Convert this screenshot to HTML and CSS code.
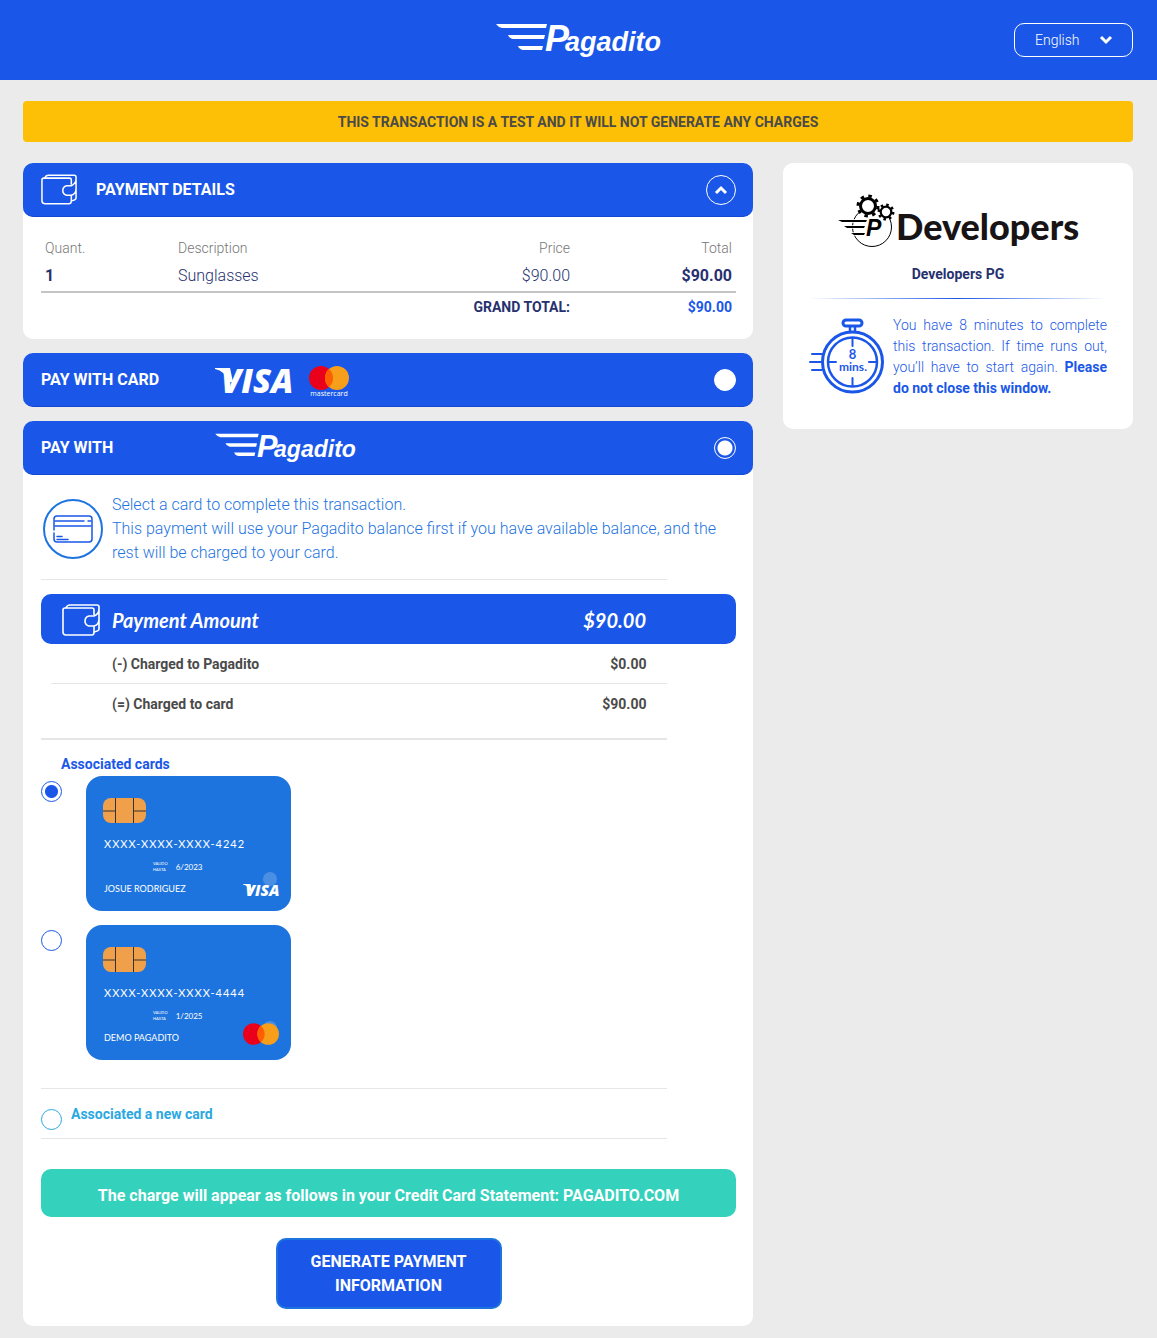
FILE: index.html
```html
<!DOCTYPE html>
<html lang="en">
<head>
<meta charset="utf-8">
<meta name="viewport" content="width=device-width, initial-scale=1">
<title>Pagadito</title>
<link rel="stylesheet" href="styles.css">
</head>
<body>
<svg class="defs" aria-hidden="true">
  <symbol id="mastercard" viewBox="0 0 40 24">
    <circle cx="12" cy="12" r="12" fill="#eb001b"/>
    <circle cx="28" cy="12" r="12" fill="#f79e1b"/>
    <path d="M20 3a12 12 0 0 1 0 18a12 12 0 0 1 0-18z" fill="#ff5f00"/>
  </symbol>
  <symbol id="wallet" viewBox="0 0 38 32">
    <g fill="none" stroke="#fff" stroke-width="1.6" stroke-linejoin="round">
      <path d="M32 11V6q0-2-2-2H3Q1 4 1 6v22q0 3 3 3h26q2 0 2-3v-6"/>
      <path d="M4 4q1-3 4-3h27q2 0 2 2v22q0 2-5 3M37 5q0 5-5 7h-5q-4 1-4 5t4 5h5q5-1 5-7"/>
    </g>
  </symbol>
  <symbol id="chip" viewBox="0 0 43 25">
    <rect width="43" height="25" rx="8" fill="#f0a04b"/>
    <path d="M12.500 0v25M30.500 0v25M0 13h12M31 13h12" stroke="#333" fill="none"/>
  </symbol>
</svg>

<header class="topbar">
  <span></span>
  <svg class="brand" viewBox="0 -2 166 34" role="img" aria-label="Pagadito">
    <path d="M0-1h51l-1 4H6Q2 2 0-1zM12 10h37l-1 4H17q-4-1-5-4zM22 21h25l-1 4H27q-4-1-5-4z"/>
    <text class="logo-text" x="49" y="26" font-size="36">P</text>
    <text class="logo-text" x="69" y="26" font-size="27">agadito</text>
  </svg>
  <div class="language">
    <select aria-label="Language"><option>English</option><option>Español</option></select>
    <svg class="chevron" viewBox="0 0 14 10"><path d="M2 2l5 5 5-5"/></svg>
  </div>
</header>

<main class="page">
  <p class="notice">THIS TRANSACTION IS A TEST AND IT WILL NOT GENERATE ANY CHARGES</p>
  <div class="columns">
    <div class="checkout">
      <section class="panel">
        <div class="panel-head">
          <svg class="wallet-sm"><use href="#wallet"/></svg>
          <h2>PAYMENT DETAILS</h2>
          <button class="collapse" type="button" aria-label="Collapse"><svg class="chevron" viewBox="0 0 14 10"><path d="M2 8l5-5 5 5"/></svg></button>
        </div>
        <div class="details-body">
          <table class="items">
            <colgroup><col class="col-quant"><col><col class="col-price"><col class="col-total"></colgroup>
            <thead><tr><th>Quant.</th><th>Description</th><th class="num">Price</th><th class="num">Total</th></tr></thead>
            <tbody><tr><td class="strong">1</td><td>Sunglasses</td><td class="num">$90.00</td><td class="num strong">$90.00</td></tr></tbody>
            <tfoot><tr><td class="num" colspan="3">GRAND TOTAL:</td><td class="num sum">$90.00</td></tr></tfoot>
          </table>
        </div>
      </section>

      <section class="panel">
        <label class="panel-head">
          <span class="method-title">PAY WITH CARD</span>
          <span class="method-logos">
            <svg class="visa-head" viewBox="0 -1 76 26" role="img" aria-label="Visa">
              <path d="M0 0h15l3 14h-4Q10 3 0 1z"/>
              <text class="visa-text" x="6" y="25" font-size="33">VISA</text>
            </svg>
            <span class="mc-head"><svg class="mc-mark" aria-hidden="true"><use href="#mastercard"/></svg><small>mastercard</small></span>
          </span>
          <input class="method-radio" type="radio" name="method">
        </label>
      </section>

      <section class="panel">
        <label class="panel-head">
          <span class="method-title">PAY WITH</span>
          <span class="method-logos">
            <svg class="brand-sm" viewBox="0 -2 166 34" role="img" aria-label="Pagadito">
              <path d="M0-1h51l-1 4H6Q2 2 0-1zM12 10h37l-1 4H17q-4-1-5-4zM22 21h25l-1 4H27q-4-1-5-4z"/>
              <text class="logo-text" x="49" y="26" font-size="36">P</text>
              <text class="logo-text" x="69" y="26" font-size="27">agadito</text>
            </svg>
          </span>
          <input class="method-radio" type="radio" name="method" checked>
        </label>
        <form class="pay-body">
          <div class="intro">
            <svg class="card-icon" viewBox="0 0 60 60">
              <g fill="none" stroke="#1a57e8" stroke-width="1.500" stroke-linecap="round">
                <circle cx="30" cy="30" r="29" stroke="#1e74de" stroke-width="2"/>
                <path d="M11 31V20q0-3 3-3h32q3 0 3 3v20q0 3-3 3H14q-3 0-3-3v-6"/>
                <path d="M12 22h29M45 22h3M12 27h36M14 37.500h5M14 40.500h11"/>
              </g>
            </svg>
            <p>Select a card to complete this transaction.<br>This payment will use your Pagadito balance first if you have available balance, and the rest will be charged to your card.</p>
          </div>
          <div class="amount">
            <svg class="wallet-lg"><use href="#wallet"/></svg>
            <h3>Payment Amount</h3><strong>$90.00</strong>
          </div>
          <dl class="split">
            <div><dt>(-) Charged to Pagadito</dt><dd>$0.00</dd></div>
            <div><dt>(=) Charged to card</dt><dd>$90.00</dd></div>
          </dl>
          <fieldset class="cards">
            <legend>Associated cards</legend>
            <label class="saved">
              <input class="ring" type="radio" name="card" checked>
              <span class="bankcard">
                <svg class="chip"><use href="#chip"/></svg>
                <span class="number">XXXX-XXXX-XXXX-4242</span>
                <span class="valid"><small>VALIDO<br>HASTA</small>6/2023</span>
                <span class="owner">JOSUE RODRIGUEZ
                  <svg class="card-brand" viewBox="0 0 72 52">
                    <circle cx="54" cy="12" r="14" fill="#fff" opacity=".2"/>
                    <path d="M0 22h15l3 14h-4Q10 25 0 23z"/>
                    <text class="visa-text" x="5" y="46" font-size="31">VISA</text>
                  </svg>
                </span>
              </span>
            </label>
            <label class="saved">
              <input class="ring" type="radio" name="card">
              <span class="bankcard">
                <svg class="chip"><use href="#chip"/></svg>
                <span class="number">XXXX-XXXX-XXXX-4444</span>
                <span class="valid"><small>VALIDO<br>HASTA</small>1/2025</span>
                <span class="owner">DEMO PAGADITO
                  <svg class="card-brand" viewBox="0 0 36 26"><circle cx="27" cy="6" r="7" fill="#fff" opacity=".2"/><use href="#mastercard" y="1" width="36" height="22"/></svg>
                </span>
              </span>
            </label>
          </fieldset>
          <label class="new-card"><input class="ring" type="radio" name="card"><span>Associated a new card</span></label>
          <p class="statement">The charge will appear as follows in your Credit Card Statement: PAGADITO.COM</p>
          <button class="submit" type="button">GENERATE PAYMENT INFORMATION</button>
        </form>
      </section>
    </div>

    <aside class="merchant">
      <svg class="merchant-logo" viewBox="0 0 240 54" role="img" aria-label="Developers">
        <circle cx="34" cy="33" r="19.500" fill="#fff" stroke="#000"/>
        <path d="M0 26h29l-1 2H4zM6 32h21l-1 2H9zM13 39h14l-1 2H16z" stroke="#fff" stroke-width="1.500" paint-order="stroke"/>
        <text class="logo-text" x="28" y="42" font-size="23">P</text>
        <g fill="#fff" stroke="#000">
          <circle cx="30" cy="12" r="10" stroke-width="3" stroke-dasharray="3.500 4.354"/>
          <circle cx="30" cy="12" r="7.500" stroke-width="3"/>
          <circle cx="48" cy="18" r="7.200" stroke-width="2.500" stroke-dasharray="2.500 3.155"/>
          <circle cx="48" cy="18" r="5.300" stroke-width="2.200"/>
        </g>
        <text class="dev-text" x="58" y="46" font-size="36">Developers</text>
      </svg>
      <h2>Developers PG</h2>
      <hr>
      <div class="timer">
        <svg class="watch" viewBox="0 0 76 76">
          <g fill="none" stroke="#1a57e8" stroke-width="2.500" stroke-linecap="round">
            <rect x="34" y="2" width="19" height="6" rx="3" stroke-width="3"/>
            <path d="M41 9v4M46 9v4"/>
            <circle cx="43.500" cy="44" r="30" stroke-width="3"/>
            <circle cx="43.500" cy="44" r="24.500"/>
            <path d="M43.500 20v8M43.500 60v8M20 44h7M60 44h7M3 36h10M1 44h12M3 52h10" stroke-width="2"/>
          </g>
          <text x="43.500" y="41" font-size="13">8</text>
          <text x="44" y="53" font-size="12">mins.</text>
        </svg>
        <p>You have 8 minutes to complete this transaction. If time runs out, you’ll have to start again. <b>Please do not close this window.</b></p>
      </div>
    </aside>
  </div>
</main>
</body>
</html>
```
FILE: styles.css
```css
* { box-sizing: border-box; }
body { margin: 0; background: #ebebeb; color: #4a4a4a; font: 14px/20px Roboto, sans-serif; }
h2, h3, p, dl, dd { margin: 0; }
.defs { position: absolute; width: 0; height: 0; }
.logo-text { font-family: "Liberation Sans", sans-serif; font-weight: 700; font-style: italic; }
.visa-text { font-family: "Open Sans", sans-serif; font-weight: 800; font-style: italic; }
.dev-text { font-family: Lato, sans-serif; font-weight: 900; fill: #181416; }

.topbar { display: grid; grid-template-columns: 1fr auto 1fr; align-items: center; height: 80px; padding: 0 24px; background: #1a57e8; }
.brand { width: 166px; height: 34px; fill: #fff; overflow: visible; }
.language { display: grid; align-items: center; justify-self: end; width: 119px; }
.language select { grid-area: 1 / 1; appearance: none; width: 100%; height: 34px; padding: 0 20px; border: 1px solid #fff; border-radius: 10px; background: transparent; color: #fff; font: 300 14px/20px Roboto, sans-serif; }
.language .chevron { grid-area: 1 / 1; justify-self: end; margin-right: 20px; pointer-events: none; }
.chevron { width: 14px; height: 10px; fill: none; stroke: #fff; stroke-width: 3; }

.page { padding: 21px 24px 12px 23px; }
.notice { padding: 12px 10px 10px; border-radius: 4px; background: #fdc006; line-height: 19px; font-weight: 700; text-align: center; }
.columns { display: grid; grid-template-columns: minmax(0, 1fr) 350px; align-items: start; gap: 30px; margin-top: 21px; }
.checkout { display: grid; gap: 14px; }
.panel { border-radius: 10px; background: #fff; }
.panel-head { display: flex; align-items: center; height: 54px; padding: 0 17px 0 18px; border-bottom: 1px solid #1448d2; border-radius: 10px; background: #1a57e8; color: #fff; font-size: 16px; font-weight: 700; }
.panel-head h2 { flex: 1; font-size: 16px; }
.wallet-sm { width: 36px; height: 31px; margin-right: 19px; }
.collapse { display: grid; place-items: center; width: 30px; height: 30px; padding: 0; border: 1px solid #fff; border-radius: 50%; background: none; }

.details-body { padding: 18px 17px 19px 18px; }
.items { width: 100%; border-collapse: collapse; table-layout: fixed; }
.items th, .items td { height: 26px; padding: 0 4px; text-align: left; font-weight: 300; }
.items th { color: #777; }
.items tbody td { height: 31px; border-bottom: 2px solid #c4c4c4; color: #27316f; font-size: 16px; }
.items tfoot td { height: 28px; color: #27316f; font-weight: 700; }
.items .num { text-align: right; }
.items .strong { font-weight: 700; }
.items tfoot .sum { color: #1a57e8; }
.col-quant { width: 133px; }
.col-price, .col-total { width: 162px; }

.method-title { width: 174px; }
.method-logos { display: flex; flex: 1; align-items: center; gap: 18px; fill: #fff; }
.visa-head { width: 76px; height: 26px; overflow: visible; }
.mc-head { display: grid; justify-items: center; padding-top: 4px; }
.mc-mark { width: 40px; height: 24px; }
.mc-head small { font: 7px/8px "Open Sans", sans-serif; }
.brand-sm { width: 142px; height: 29px; overflow: visible; }
.method-radio { appearance: none; width: 22px; height: 22px; margin: 0; border: 1px solid #fff; border-radius: 50%; background: #fff; }
.method-radio:checked { background: radial-gradient(circle, #fff 7px, #1a57e8 8px); }

.pay-body { padding: 18px 17px 17px 18px; }
.intro { display: flex; gap: 9px; padding-left: 2px; color: #1e74de; font-size: 16px; line-height: 24px; font-weight: 300; }
.card-icon { flex: none; width: 60px; height: 60px; margin-top: 6px; }
.amount { position: relative; display: flex; align-items: center; height: 50px; margin-top: 29px; padding: 2px 90px 0 21px; border-radius: 10px; background: #1a57e8; color: #fff; }
.amount::before { content: ""; position: absolute; top: -15px; left: 0; width: 90%; border-top: 1px solid #e6e6e6; }
.amount h3, .amount strong { font: italic 700 20px/24px Lato, sans-serif; }
.amount h3 { flex: 1; }
.wallet-lg { width: 38px; height: 32px; margin-right: 12px; }
.split { width: 90%; padding-bottom: 15px; border-bottom: 2px solid #e6e6e6; font-weight: 700; }
.split div { display: flex; justify-content: space-between; margin-left: 10px; padding: 10px 20px 9px 61px; }
.split div:first-child { border-bottom: 1px solid #e6e6e6; }
.cards { display: grid; gap: 14px; width: 90%; margin: 0; padding: 2px 0 28px; border: 0; border-bottom: 1px solid #e6e6e6; }
.cards legend { padding: 14px 20px 0; color: #1a57e8; font-weight: 700; }
.saved { display: flex; gap: 24px; }
.ring { appearance: none; flex: none; width: 21px; height: 21px; margin: 0; border: 1px solid #1a57e8; border-radius: 50%; background: #fff; }
.saved .ring { margin-top: 5px; }
.ring:checked { background: radial-gradient(circle, #1a57e8 6px, #fff 7px); }
.bankcard { display: flex; flex-direction: column; width: 205px; height: 135px; padding: 22px 12px 0 17px; border-radius: 16px; background: #1e74de; color: #fff; font: 9px/12px Lato, sans-serif; }
.chip { width: 43px; height: 25px; }
.number { margin: 15px 0 0 1px; font-size: 11px; letter-spacing: 1px; }
.valid { display: flex; align-items: center; gap: 8px; margin: 11px 0 0 50px; font-size: 8px; }
.valid small { font-size: 4px; line-height: 6px; }
.owner { display: flex; align-items: flex-end; justify-content: space-between; padding-left: 1px; line-height: 20px; }
.card-brand { width: 36px; height: 26px; fill: #fff; overflow: visible; }
.new-card { display: flex; align-items: center; gap: 9px; width: 90%; height: 50px; border-bottom: 1px solid #e6e6e6; color: #2ba8df; font-weight: 700; }
.new-card .ring { margin-top: 11px; border-color: #2ba8df; }
.statement { margin-top: 30px; padding: 15px 10px 9px; border-radius: 10px; background: #34d1bc; color: #fff; font-size: 16px; line-height: 24px; font-weight: 700; text-align: center; }
.submit { display: block; width: 226px; margin: 21px auto 0; padding: 10px 20px 9px; border: 2px solid #1e74de; border-radius: 10px; background: #1a57e8; color: #fff; font: 700 16px/24px Roboto, sans-serif; }

.merchant { padding: 31px 26px 30px; border-radius: 10px; background: #fff; text-align: center; }
.merchant-logo { display: block; width: 240px; height: 54px; margin: 0 auto; overflow: visible; }
.merchant h2 { margin-top: 16px; color: #27316f; font-size: 14px; }
.merchant hr { height: 1px; margin: 14px 0 16px; border: 0; background: linear-gradient(90deg, transparent, #1a57e8, transparent); }
.timer { display: flex; gap: 8px; color: #1a57e8; text-align: justify; font-weight: 300; line-height: 21px; }
.timer b { font-weight: 700; }
.watch { flex: none; width: 76px; height: 76px; margin-top: 3px; }
.watch text { fill: #1a57e8; font-family: Lato, sans-serif; font-weight: 700; text-anchor: middle; }
```
